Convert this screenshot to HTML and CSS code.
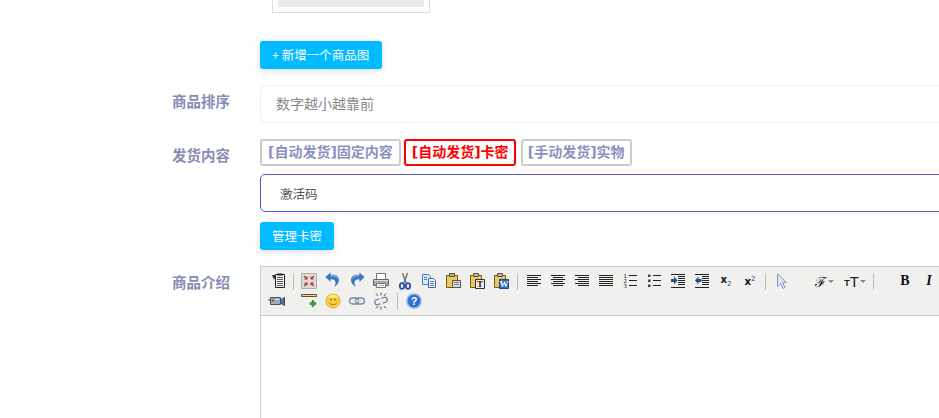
FILE: index.html
```html
<!DOCTYPE html>
<html lang="zh-CN">
<head>
    <meta charset="UTF-8">
    <meta name="viewport" content="width=device-width, initial-scale=1.0">
    <title>商品设置</title>
    <link rel="stylesheet" href="styles.css">
</head>
<body>
    <svg class="icon-defs" width="0" height="0" aria-hidden="true">
        <symbol id="i-source" viewBox="0 0 20 20">
            <path d="M6.500 3.500h9v13h-9z" fill="#f4f4f0" stroke="#222"/>
            <path d="M8 6.500h6M8 8.500h6M8 10.500h6M8 12.500h6M8 14.500h6" stroke="#555"/>
            <path d="M3 4l4 0v2.500l-2 2z" fill="#333"/>
            <path d="M8.500 2.500h5v2h-5z" fill="#222"/>
        </symbol>
        <symbol id="i-full" viewBox="0 0 20 20">
            <path d="M2.500 2.500h15v15h-15z" fill="#dedcd8" stroke="#b0aeaa"/>
            <path d="M8.500 8.500H5l1.200-1.200L4.500 5.500l1-1 1.800 1.700L8.500 5zM11.500 8.500H15l-1.200-1.200 1.700-1.800-1-1-1.800 1.700L11.500 5zM8.500 11.500H5l1.200 1.200-1.700 1.800 1 1 1.800-1.700L8.500 15zM11.500 11.500H15l-1.200 1.200 1.700 1.800-1 1-1.800-1.700L11.500 15z" fill="#b8382c"/>
        </symbol>
        <symbol id="i-undo" viewBox="0 0 20 20">
            <path d="M7.500 4c4.500-1.300 8.500 1 8.500 5 0 3-2 5-5 7 1.300-2.500 2-4 1.300-5.600C11.500 8.700 9.500 8 7.500 8.500V11L2.500 6l5-4.500z" fill="#3a78c2"/>
            <path d="M8 5c3-.8 5.500.3 6.500 2.500" stroke="#9cc0ea" fill="none"/>
        </symbol>
        <symbol id="i-redo" viewBox="0 0 20 20">
            <path d="M12.500 4C8 2.700 4 5 4 9c0 3 2 5 5 7-1.300-2.500-2-4-1.300-5.600.8-1.700 2.800-2.400 4.800-1.900V11l5-5-5-4.500z" fill="#3a78c2"/>
            <path d="M12 5c-3-.8-5.500.3-6.500 2.500" stroke="#9cc0ea" fill="none"/>
        </symbol>
        <symbol id="i-print" viewBox="0 0 20 20">
            <path d="M5.500 2.500h9v6h-9z" fill="#fff" stroke="#777"/>
            <path d="M2.500 8.500h15v6h-15z" fill="#aaa" stroke="#666"/>
            <path d="M3 9.500h14" stroke="#ddd"/>
            <path d="M5.500 12.500h9v4h-9z" fill="#fff" stroke="#777"/>
            <path d="M7 14.500h6" stroke="#bbb"/>
        </symbol>
        <symbol id="i-cut" viewBox="0 0 20 20">
            <path d="M7.500 2l3.500 10M12.500 2L9 12" stroke="#777" stroke-width="1.500"/>
            <ellipse cx="7" cy="15" rx="2.200" ry="2.800" fill="none" stroke="#2d50a8" stroke-width="1.800"/>
            <ellipse cx="13" cy="15" rx="2.200" ry="2.800" fill="none" stroke="#2d50a8" stroke-width="1.800"/>
        </symbol>
        <symbol id="i-copy" viewBox="0 0 20 20">
            <path d="M3.500 3.500h6l2 2v8h-8z" fill="#dce8f8" stroke="#4d7cc0"/>
            <path d="M9.500 7.500h5l2 2v7h-7z" fill="#fff" stroke="#3a68b0"/>
            <path d="M5 6.500h3M5 8.500h3M11 10.500h4M11 12.500h4M11 14.500h4" stroke="#4d7cc0"/>
        </symbol>
        <symbol id="i-paste" viewBox="0 0 20 20">
            <path d="M3.500 4.500h11v12h-11z" fill="#e8c860" stroke="#7a5a10"/>
            <path d="M6.500 2.500h5v3h-5z" fill="#c8b070" stroke="#555"/>
            <path d="M9.500 9.500h8v7h-8z" fill="#ddd" stroke="#555"/>
            <path d="M11 11.500h5M11 13.500h5" stroke="#777"/>
        </symbol>
        <symbol id="i-left" viewBox="0 0 20 20">
            <path d="M3 4.500h14M3 6.500h11M3 8.500h14M3 10.500h11M3 12.500h14M3 14.500h11" stroke="#222"/>
        </symbol>
        <symbol id="i-center" viewBox="0 0 20 20">
            <path d="M3 4.500h14M5 6.500h10M3 8.500h14M5 10.500h10M3 12.500h14M5 14.500h10" stroke="#222"/>
        </symbol>
        <symbol id="i-right" viewBox="0 0 20 20">
            <path d="M3 4.500h14M6 6.500h11M3 8.500h14M6 10.500h11M3 12.500h14M6 14.500h11" stroke="#222"/>
        </symbol>
        <symbol id="i-justify" viewBox="0 0 20 20">
            <path d="M3 4.500h14M3 6.500h14M3 8.500h14M3 10.500h14M3 12.500h14M3 14.500h14" stroke="#222"/>
        </symbol>
        <symbol id="i-ul" viewBox="0 0 20 20">
            <path d="M9 4.500h8M9 9.500h8M9 14.500h8" stroke="#222"/>
            <path d="M4 3.500h2.500V6H4zM4 8.500h2.500V11H4zM4 13.500h2.500V16H4z" fill="#444"/>
        </symbol>
        <symbol id="i-indent" viewBox="0 0 20 20">
            <path d="M3 3.500h14M10 5.500h7M10 7.500h7M10 9.500h7M10 11.500h7M10 13.500h7M3 16.500h14" stroke="#222"/>
            <path d="M3 8h3V5.500l3.500 4L6 13.500V11H3z" fill="#24508c"/>
        </symbol>
        <symbol id="i-outdent" viewBox="0 0 20 20">
            <path d="M3 3.500h14M10 5.500h7M10 7.500h7M10 9.500h7M10 11.500h7M10 13.500h7M3 16.500h14" stroke="#222"/>
            <path d="M9.500 8h-3V5.500l-3.500 4 3.500 4V11h3z" fill="#24508c"/>
        </symbol>
        <symbol id="i-arrow" viewBox="0 0 20 20">
            <path d="M5.500 3v12.500l3-3 2.500 5 2-1-2.500-5h4z" fill="#dfe8f6" stroke="#7f98c4"/>
        </symbol>
        <symbol id="i-video" viewBox="0 0 20 20">
            <path d="M3.500 6.500h10v7h-10z" fill="#9caabf" stroke="#445470"/>
            <path d="M13.500 9l4-2.500v8l-4-2.500z" fill="#5c6c88" stroke="#3c4c68"/>
            <path d="M1.500 8h2v2h-2z" fill="#667890"/>
            <path d="M5 8.500h2v2H5z" fill="#c83c3c"/>
            <path d="M8 8.500h4" stroke="#e4e8f0"/>
        </symbol>
        <symbol id="i-hr" viewBox="0 0 20 20">
            <path d="M2.500 3.500h15v2h-15z" fill="#e8d8a0" stroke="#6c5020"/>
            <path d="M13 9.500h2v2h2v2h-2v2h-2v-2h-2v-2h2z" fill="#40a030" stroke="#2c7020" stroke-width=".5"/>
        </symbol>
        <symbol id="i-smile" viewBox="0 0 20 20">
            <circle cx="10" cy="10" r="7" fill="#f8d040" stroke="#e8b030"/>
            <path d="M5 6.500a6 6 0 0 1 10 0z" fill="#fdeb98"/>
            <path d="M8 7.500v2M12 7.500v2" stroke="#6c4a10"/>
            <path d="M6 11.500c2 3 6 3 8 0" fill="none" stroke="#a8741c"/>
        </symbol>
        <symbol id="i-link" viewBox="0 0 20 20">
            <rect x="2.500" y="7" width="9" height="6" rx="3" fill="none" stroke="#7888a8" stroke-width="1.300"/>
            <rect x="8.500" y="7" width="9" height="6" rx="3" fill="none" stroke="#7888a8" stroke-width="1.300"/>
            <path d="M6 10h8" stroke="#c4cedf" stroke-width="1.300"/>
        </symbol>
        <symbol id="i-unlink" viewBox="0 0 20 20">
            <path d="M9 7.500H6a2.500 2.500 0 0 0 0 5h3M11 7.500h3a2.500 2.500 0 0 1 0 5h-3" transform="rotate(-18 10 10)" fill="none" stroke="#7888a8" stroke-width="1.400"/>
            <path d="M10 1.500v3M10 15.500v3M5 2.500l2 2.500M15 2.500L13 5M5 17.500L7 15M15 17.500L13 15" stroke="#555"/>
        </symbol>
    </svg>

    <div class="form">
        <div class="row">
            <div class="label"></div>
            <div class="field">
                <div class="thumb"><div class="thumb-img"></div></div>
                <a class="btn btn-add" href="#">+ 新增一个商品图</a>
            </div>
        </div>

        <div class="row row-sort">
            <div class="label">商品排序</div>
            <div class="field">
                <input class="text-input" type="text" placeholder="数字越小越靠前">
            </div>
        </div>

        <div class="row row-delivery">
            <div class="label">发货内容</div>
            <div class="field">
                <div class="tags">
                    <span class="tag">[自动发货]固定内容</span>
                    <span class="tag tag-active">[自动发货]卡密</span>
                    <span class="tag tag-last">[手动发货]实物</span>
                </div>
                <input class="text-input text-input-focus" type="text" value="激活码">
                <a class="btn btn-manage" href="#">管理卡密</a>
            </div>
        </div>

        <div class="row row-editor">
            <div class="label">商品介绍</div>
            <div class="field">
                <div class="editor">
                    <div class="toolbar">
                        <div class="tool-row">
                            <span class="tool"><svg><use href="#i-source"/></svg></span>
                            <span class="sep sep-first"></span>
                            <span class="tool"><svg><use href="#i-full"/></svg></span>
                            <span class="tool"><svg><use href="#i-undo"/></svg></span>
                            <span class="tool"><svg><use href="#i-redo"/></svg></span>
                            <span class="tool"><svg><use href="#i-print"/></svg></span>
                            <span class="tool"><svg><use href="#i-cut"/></svg></span>
                            <span class="tool"><svg><use href="#i-copy"/></svg></span>
                            <span class="tool"><svg><use href="#i-paste"/></svg></span>
                            <span class="tool">
                                <svg viewBox="0 0 20 20">
                                    <path d="M3.500 4.500h11v12h-11z" fill="#e8c860" stroke="#7a5a10"/>
                                    <path d="M6.500 2.500h5v3h-5z" fill="#c8b070" stroke="#555"/>
                                    <path d="M8.500 8.500h9v9h-9z" fill="#eee" stroke="#333"/>
                                    <text x="13" y="16" font-family="Liberation Serif" font-size="9" font-weight="bold" text-anchor="middle" fill="#111">T</text>
                                </svg>
                            </span>
                            <span class="tool">
                                <svg viewBox="0 0 20 20">
                                    <path d="M3.500 4.500h11v12h-11z" fill="#e8c860" stroke="#7a5a10"/>
                                    <path d="M6.500 2.500h5v3h-5z" fill="#c8b070" stroke="#555"/>
                                    <path d="M8.500 8.500h9v9h-9z" fill="#2f6cc0" stroke="#1d4488"/>
                                    <text x="13" y="16" font-family="Liberation Serif" font-size="9" font-weight="bold" text-anchor="middle" fill="#fff">W</text>
                                </svg>
                            </span>
                            <span class="sep"></span>
                            <span class="tool"><svg><use href="#i-left"/></svg></span>
                            <span class="tool"><svg><use href="#i-center"/></svg></span>
                            <span class="tool"><svg><use href="#i-right"/></svg></span>
                            <span class="tool"><svg><use href="#i-justify"/></svg></span>
                            <span class="tool">
                                <svg viewBox="0 0 20 20">
                                    <path d="M9 4.500h8M9 9.500h8M9 14.500h8" stroke="#222"/>
                                    <text x="3.500" y="7" font-family="DejaVu Sans" font-size="5.500" fill="#222">1</text>
                                    <text x="3.500" y="12" font-family="DejaVu Sans" font-size="5.500" fill="#222">2</text>
                                    <text x="3.500" y="17" font-family="DejaVu Sans" font-size="5.500" fill="#222">3</text>
                                </svg>
                            </span>
                            <span class="tool"><svg><use href="#i-ul"/></svg></span>
                            <span class="tool"><svg><use href="#i-indent"/></svg></span>
                            <span class="tool"><svg><use href="#i-outdent"/></svg></span>
                            <span class="tool tool-text"><span>x<sub>2</sub></span></span>
                            <span class="tool tool-text"><span>x<sup>2</sup></span></span>
                            <span class="sep sep-third"></span>
                            <span class="tool"><svg><use href="#i-arrow"/></svg></span>
                            <span class="tool tool-font">ℱ<i class="caret"></i></span>
                            <span class="tool tool-size"><small>T</small>T<i class="caret"></i></span>
                            <span class="sep sep-size"></span>
                            <span class="tool tool-bold">B</span>
                            <span class="tool tool-italic">I</span>
                        </div>
                        <div class="tool-row">
                            <span class="tool tool-video"><svg><use href="#i-video"/></svg></span>
                            <span class="tool"><svg><use href="#i-hr"/></svg></span>
                            <span class="tool"><svg><use href="#i-smile"/></svg></span>
                            <span class="tool"><svg><use href="#i-link"/></svg></span>
                            <span class="tool"><svg><use href="#i-unlink"/></svg></span>
                            <span class="sep"></span>
                            <span class="tool">
                                <svg viewBox="0 0 20 20">
                                    <circle cx="10" cy="10" r="7" fill="#2f6fd0" stroke="#8ab0e8" stroke-width="1.500"/>
                                    <text x="10" y="14" font-family="Liberation Sans" font-size="11" font-weight="bold" text-anchor="middle" fill="#fff">?</text>
                                </svg>
                            </span>
                        </div>
                    </div>
                    <div class="editor-body"></div>
                </div>
            </div>
        </div>
    </div>
</body>
</html>
```

FILE: styles.css
```css
html, body {
    height: 418px;
    overflow: hidden;
}
body {
    margin: 0;
    background: #fff;
    font-family: "Noto Sans CJK SC", "Liberation Sans", sans-serif;
    font-size: 13px;
    color: #444;
}
.icon-defs {
    display: block;
}
.form {
    width: 1200px;
}
.row {
    display: flex;
}
.label {
    width: 230px;
    flex: none;
    box-sizing: border-box;
    padding: 6px 0 0 172px;
    font-size: 14.5px;
    line-height: 20px;
    font-weight: bold;
    color: #8a8cb6;
    white-space: nowrap;
}
.field {
    flex: 1;
    margin-left: 30px;
    min-width: 0;
}

.thumb {
    box-sizing: border-box;
    width: 158px;
    height: 13px;
    margin-left: 12px;
    padding: 0 5px;
    border: 1px solid #ddd;
    border-top: none;
}
.thumb-img {
    height: 7px;
    background: #ebebeb;
}

.btn {
    display: block;
    box-sizing: border-box;
    height: 28px;
    line-height: 28px;
    padding: 0 12px;
    background: #00bbff;
    color: #fff;
    font-size: 12.5px;
    text-decoration: none;
    white-space: nowrap;
    border-radius: 3px;
    box-shadow: 0 2px 6px rgba(0, 40, 80, 0.15);
}
.btn-add {
    width: 122px;
    margin-top: 28px;
}
.btn-manage {
    width: 74px;
    margin-top: 10px;
}

.row-sort, .row-delivery, .row-editor {
    margin-top: 16px;
}

.text-input {
    display: block;
    box-sizing: border-box;
    width: 100%;
    height: 38px;
    padding: 0 15px 2px;
    border: 1px solid #eeeefb;
    border-radius: 5px;
    background: #fff;
    font-family: inherit;
    font-size: 14px;
    color: #555;
    outline: none;
}
.text-input::placeholder {
    color: #888;
    opacity: 1;
}
.text-input-focus {
    padding: 0 19px;
    border-color: #5558c0;
    font-size: 12.5px;
}

.tags {
    display: flex;
    gap: 3px;
    margin-bottom: 8px;
}
.tag {
    box-sizing: border-box;
    height: 27px;
    line-height: 23px;
    padding: 0 6px;
    border: 2px solid #ccc;
    border-radius: 3px;
    font-family: "DejaVu Sans", "Noto Sans CJK SC", sans-serif;
    font-size: 14px;
    font-weight: bold;
    color: #8a90c0;
    white-space: nowrap;
}
.tag-active {
    width: 112px;
    margin-right: 2px;
    border-color: #f00;
    color: #f00;
}
.tag-last {
    width: 111px;
    padding: 0 5px;
}

.editor {
    border: 1px solid #ccc;
    height: 200px;
}
.toolbar {
    height: 49px;
    padding-top: 4px;
    box-sizing: border-box;
    background: #f0f0ee;
    border-bottom: 1px solid #ccc;
}
.tool-row {
    display: flex;
    height: 20px;
    align-items: center;
    padding-left: 6px;
}
.tool {
    flex: none;
    display: flex;
    align-items: center;
    justify-content: center;
    width: 24px;
    height: 20px;
    color: #111;
}
.tool svg {
    width: 20px;
    height: 20px;
}
.sep {
    flex: none;
    width: 1px;
    height: 17px;
    margin: 0 4px;
    background: #bbb;
}
.sep-first {
    margin: 0 3px 0 2px;
}
.sep-third {
    margin-left: 3px;
}
.tool-text {
    font-family: "DejaVu Sans", sans-serif;
    font-size: 10px;
    font-weight: bold;
}
.tool-text sub, .tool-text sup {
    font-size: 7px;
    font-weight: normal;
    color: #24508c;
}
.tool-font {
    width: 40px;
    margin-left: 10px;
    font-family: "DejaVu Serif", serif;
    font-size: 14px;
    color: #222;
}
.tool-size {
    width: 22px;
    font-family: "Liberation Sans", sans-serif;
    font-size: 15px;
    color: #222;
}
.tool-size small {
    font-size: 9px;
    font-weight: bold;
    margin-top: 3px;
}
.caret {
    width: 0;
    height: 0;
    margin-left: 1px;
    border-left: 3px solid transparent;
    border-right: 3px solid transparent;
    border-top: 3px solid #888;
}
.sep-size {
    margin: 0 19px 0 7px;
}
.tool-bold {
    font-family: "Liberation Serif", serif;
    font-weight: bold;
    font-size: 14px;
}
.tool-italic {
    font-family: "Liberation Serif", serif;
    font-weight: bold;
    font-style: italic;
    font-size: 14px;
}
.tool-video {
    margin: 0 8px 0 -2px;
}
```
